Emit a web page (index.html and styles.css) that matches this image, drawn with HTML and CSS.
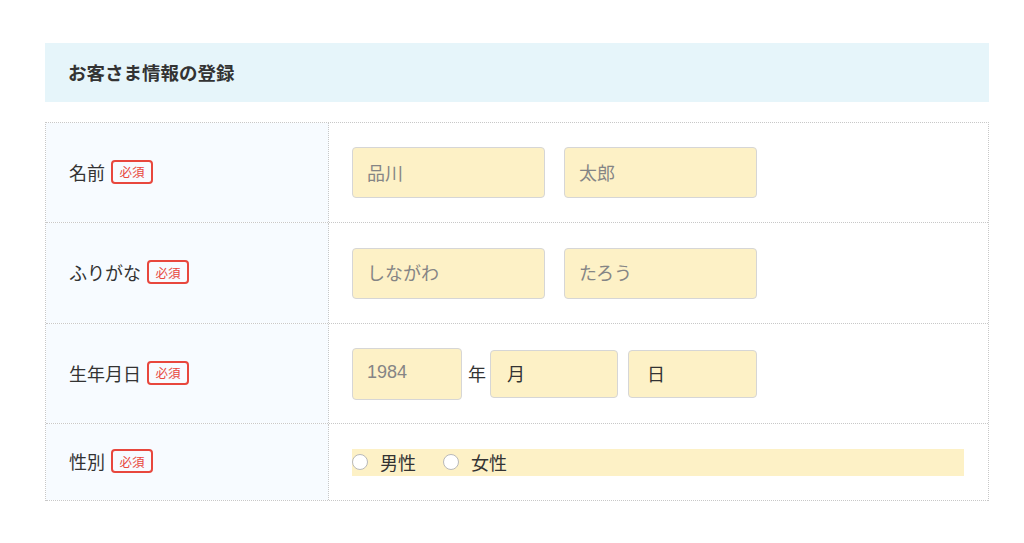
FILE: index.html
```html
<!DOCTYPE html>
<html lang="ja">
<head>
<meta charset="utf-8">
<link rel="stylesheet" href="styles.css">
</head>
<body>
<div class="wrap">
  <div class="head">お客さま情報の登録</div>
  <div class="table">
    <div class="row r1">
      <div class="th"><span class="lbl">名前</span><span class="req">必須</span></div>
      <div class="td">
        <div class="inp w193 ph">品川</div>
        <div class="inp w193 ph">太郎</div>
      </div>
    </div>
    <div class="row r2">
      <div class="th"><span class="lbl">ふりがな</span><span class="req">必須</span></div>
      <div class="td">
        <div class="inp w193 ph">しながわ</div>
        <div class="inp w193 ph">たろう</div>
      </div>
    </div>
    <div class="row r3">
      <div class="th"><span class="lbl">生年月日</span><span class="req">必須</span></div>
      <div class="td date">
        <div class="inp year ph">1984</div>
        <span class="unit">年</span>
        <div class="inp sel">月</div>
        <div class="inp sel day">日</div>
      </div>
    </div>
    <div class="row r4">
      <div class="th"><span class="lbl">性別</span><span class="req">必須</span></div>
      <div class="td">
        <div class="radios">
          <span class="radio"><span class="circle"></span>男性</span>
          <span class="radio"><span class="circle"></span>女性</span>
        </div>
      </div>
    </div>
  </div>
</div>
</body>
</html>
```
FILE: styles.css
```css
html, body {
  margin: 0;
  padding: 0;
  background: #fff;
}
body {
  font-family: "Liberation Sans", "Noto Sans CJK JP", sans-serif;
  color: #333;
}
.wrap {
  margin-left: 45px;
  width: 944px;
  padding-top: 43px;
}
.head {
  height: 59px;
  background: #e6f5fa;
  display: flex;
  align-items: center;
  padding-left: 23px;
  padding-bottom: 1px;
  font-size: 18.5px;
  font-weight: bold;
  color: #333;
  box-sizing: border-box;
}
.table {
  margin-top: 20px;
  border: 1px dotted #c8c8c8;
  border-bottom: none;
}
.row {
  display: grid;
  grid-template-columns: 283px 1fr;
  border-bottom: 1px dotted #c8c8c8;
}
.r1, .r3 { height: 99px; }
.r2 { height: 100px; }
.r4 { height: 76px; }
.th {
  background: #f7fbff;
  border-right: 1px dotted #c8c8c8;
  display: flex;
  align-items: center;
  padding-left: 23px;
  padding-bottom: 2px;
  font-size: 18px;
}
.req {
  margin-left: 6px;
  border: 2px solid #e8473d;
  border-radius: 4px;
  color: #e8473d;
  font-size: 12.5px;
  height: 24px;
  width: 42px;
  box-sizing: border-box;
  display: inline-flex;
  align-items: center;
  justify-content: center;
}
.td {
  display: flex;
  align-items: center;
  padding-left: 23px;
  gap: 19px;
}
.inp {
  background: #fdf1c6;
  border: 1px solid #d6d6d6;
  border-radius: 4px;
  box-sizing: border-box;
  height: 51px;
  display: flex;
  align-items: center;
  padding-left: 14px;
  padding-bottom: 2px;
  font-size: 18px;
  color: #333;
}
.ph { color: #858585; }
.w193 { width: 193px; }
.date { gap: 0; }
.year { width: 110px; height: 52px; }
.unit {
  font-size: 18px;
  margin: 0 4px 2px 6px;
  color: #333;
}
.sel {
  width: 128px;
  height: 48px;
  padding-left: 16px;
}
.day {
  margin-left: 10px;
  width: 129px;
  padding-left: 18px;
}
.radios {
  background: #fdf1c6;
  width: 612px;
  height: 27px;
  display: flex;
  align-items: center;
  gap: 27px;
  font-size: 18px;
  color: #333;
}
.radio {
  display: inline-flex;
  align-items: center;
  gap: 12px;
}
.circle {
  width: 16px;
  height: 16px;
  border-radius: 50%;
  background: #fff;
  border: 1px solid #b9b9b9;
  box-sizing: border-box;
}
```
